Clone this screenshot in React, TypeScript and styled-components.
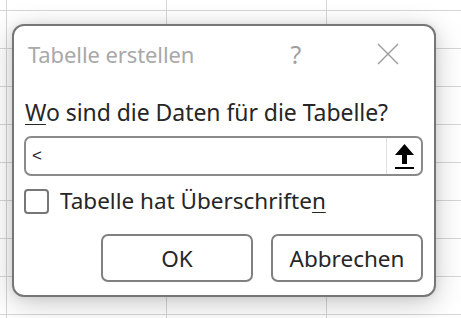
import React from "react";
import styled, { createGlobalStyle } from "styled-components";

const Global = createGlobalStyle`
  html, body { margin: 0; padding: 0; }
  body {
    width: 461px;
    height: 318px;
    overflow: hidden;
    background-color: #ffffff;
    background-image:
      linear-gradient(to right, #d6d6d6 1px, transparent 1px),
      linear-gradient(to bottom, #d6d6d6 1px, transparent 1px);
    background-size: 160px 38px;
    background-position: 6px 10px;
    font-family: "Noto Sans", "Open Sans", sans-serif;
  }
`;

const Page = styled.div`
  padding: 24px 0 0 12px;
  width: 461px;
  height: 318px;
  box-sizing: border-box;
`;

const Dialog = styled.div`
  width: 424px;
  height: 273px;
  box-sizing: border-box;
  background: #ffffff;
  border: 2px solid #767676;
  border-radius: 12px;
  box-shadow: 0 6px 28px rgba(0, 0, 0, 0.22), 0 0 8px rgba(0, 0, 0, 0.08);
  display: flex;
  flex-direction: column;
`;

const TitleBar = styled.div`
  height: 56px;
  display: flex;
  align-items: center;
  padding: 0 0 0 14px;
`;

const Title = styled.div`
  flex: 1;
  font-size: 22px;
  color: #a8a8a8;
  letter-spacing: -0.1px;
`;

const HelpButton = styled.div`
  width: 30px;
  text-align: center;
  font-size: 25px;
  color: #a0a0a0;
  margin-right: 65px;
`;

const CloseButton = styled.div`
  width: 24px;
  height: 24px;
  margin-right: 34px;
  display: flex;
  align-items: center;
  justify-content: center;
`;

const Body = styled.div`
  padding: 15px 11px 0 10px;
  display: flex;
  flex-direction: column;
`;

const Question = styled.div`
  font-size: 23px;
  color: #262626;
  letter-spacing: -0.05px;
  line-height: 30px;
  padding-left: 1px;
`;

const Ul = styled.span`
  text-decoration: underline;
  text-underline-offset: 3px;
  text-decoration-thickness: 1px;
`;

const InputBox = styled.div`
  margin-top: 9px;
  height: 40px;
  box-sizing: border-box;
  border: 2px solid #8a8a8a;
  border-radius: 7px;
  display: flex;
  align-items: stretch;
`;

const InputText = styled.div`
  flex: 1;
  display: flex;
  align-items: center;
  padding-left: 6px;
  font-family: "Liberation Sans", sans-serif;
  font-size: 17px;
  color: #1a1a2e;
`;

const RefButton = styled.div`
  width: 34px;
  border-left: 1px solid #e0e0e0;
  display: flex;
  align-items: center;
  justify-content: center;
`;

const CheckRow = styled.label`
  margin-top: 11px;
  display: flex;
  align-items: center;
  gap: 11px;
`;

const Box = styled.span`
  width: 25px;
  height: 25px;
  box-sizing: border-box;
  border: 2px solid #777777;
  border-radius: 4px;
`;

const CheckLabel = styled.span`
  font-size: 22.5px;
  color: #262626;
  line-height: 28px;
`;

const Buttons = styled.div`
  margin-top: 19px;
  display: flex;
  justify-content: flex-end;
  gap: 18px;
`;

const Button = styled.div`
  width: 152px;
  height: 48px;
  box-sizing: border-box;
  border: 2px solid #808080;
  border-radius: 7px;
  display: flex;
  align-items: center;
  justify-content: center;
  font-size: 22.5px;
  color: #262626;
`;

export default function App() {
  return (
    <>
      <Global />
      <Page>
        <Dialog>
          <TitleBar>
            <Title>Tabelle erstellen</Title>
            <HelpButton>?</HelpButton>
            <CloseButton>
              <svg width="22" height="22" viewBox="0 0 22 22">
                <path d="M1 1 L21 21 M21 1 L1 21" stroke="#9c9c9c" strokeWidth="1.4" fill="none" />
              </svg>
            </CloseButton>
          </TitleBar>
          <Body>
            <Question>
              <Ul>W</Ul>o sind die Daten für die Tabelle?
            </Question>
            <InputBox>
              <InputText>&lt;</InputText>
              <RefButton>
                <svg width="21" height="27" viewBox="0 0 21 27">
                  <path d="M10.5 1 L20 12 L13 12 L13 21 L8 21 L8 12 L1 12 Z" fill="#000" />
                  <path d="M1 25 H20" stroke="#000" strokeWidth="2" />
                </svg>
              </RefButton>
            </InputBox>
            <CheckRow>
              <Box />
              <CheckLabel>
                Tabelle hat Überschrifte<Ul>n</Ul>
              </CheckLabel>
            </CheckRow>
            <Buttons>
              <Button>OK</Button>
              <Button>Abbrechen</Button>
            </Buttons>
          </Body>
        </Dialog>
      </Page>
    </>
  );
}
